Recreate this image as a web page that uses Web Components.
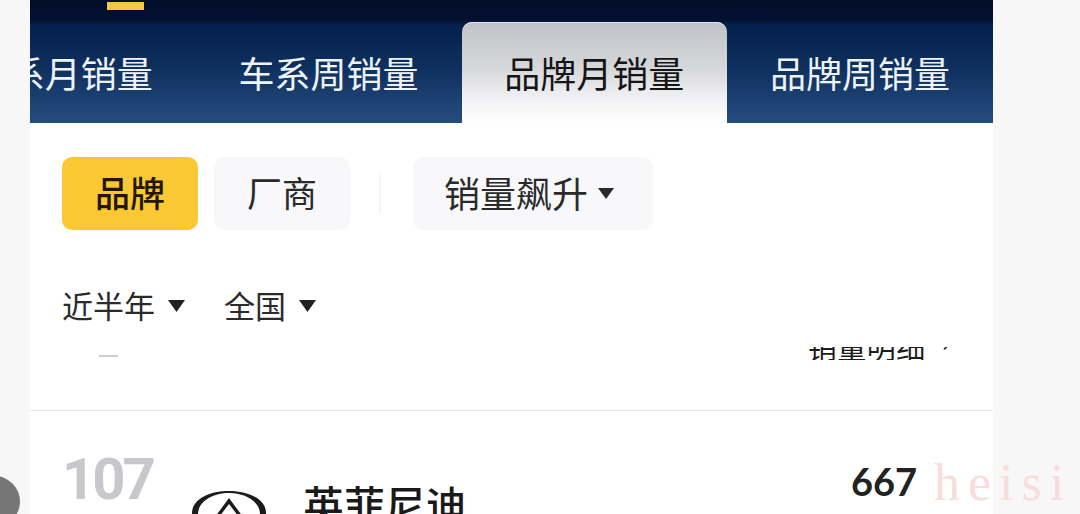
<!DOCTYPE html>
<html lang="zh-CN">
<head>
<meta charset="utf-8">
<title>品牌月销量</title>
<style>
  html, body { margin: 0; height: 514px; overflow: hidden; background: #f7f7f7; }
  body { font-family: "Noto Sans CJK SC", "Noto Sans", sans-serif; }
</style>
</head>
<body>
<sales-panel>
  <sales-tabs active="2">
    <span>车系月销量</span>
    <span>车系周销量</span>
    <span>品牌月销量</span>
    <span>品牌周销量</span>
  </sales-tabs>
  <filter-bar>
    <filter-chip slot="main" active>品牌</filter-chip>
    <filter-chip slot="main">厂商</filter-chip>
    <filter-chip slot="sort" arrow>销量飙升</filter-chip>
    <filter-drop slot="sub">近半年</filter-drop>
    <filter-drop slot="sub">全国</filter-drop>
  </filter-bar>
  <clip-header>销量明细</clip-header>
  <rank-row rank="107" name="英菲尼迪" sales="667">
    <svg slot="logo" width="76" height="46" viewBox="0 0 76 46" aria-label="英菲尼迪">
      <path fill="#1c1c1c" fill-rule="evenodd" d="M37 0C16 0 0 9 0 22s17 23 37 23 37-10 37-23S58 0 37 0ZM37 2C20 2 6 11 6 23s14 20 31 20 31-8 31-20S54 2 37 2Z"/>
      <path fill="#1c1c1c" d="M37 7 20 30h4L37 13l13 17h4Z"/>
    </svg>
  </rank-row>
</sales-panel>
<page-overlay></page-overlay>

<script>
// outer white column, sits at x 30..993 on the grey page
class SalesPanel extends HTMLElement {
  constructor() {
    super();
    this.attachShadow({ mode: 'open' }).innerHTML = `
      <style>
        :host { display: block; width: 963px; height: 514px; margin-left: 30px; background: #fff; overflow: hidden; }
      </style>
      <slot></slot>`;
  }
}

// dark header band + tab strip, scrolled a little so the first tab is cut off
class SalesTabs extends HTMLElement {
  constructor() {
    super();
    this.attachShadow({ mode: 'open' }).innerHTML = `
      <style>
        :host {
          display: block;
          height: 123px;
          overflow: hidden;
          background: linear-gradient(180deg, #020d28 0, #031030 20px, #04204c 24px, #0f315f 70px, #264d80 123px);
        }
        .band { height: 22px; padding-left: 77px; }
        .mark { display: block; width: 37px; height: 8px; margin-top: 2px; background: #f4c64a; float: left; }
        .strip { display: flex; margin-left: -100px; width: 1063px; height: 101px; }
        ::slotted(span) {
          flex: 1 1 0;
          display: flex;
          align-items: center;
          justify-content: center;
          padding-bottom: 2px;
          font-size: 36px;
          color: #eef3f8;
          white-space: nowrap;
        }
        ::slotted(span.on) {
          color: #151515;
          border-radius: 10px 10px 0 0;
          box-shadow: inset 0 1px 0 #dfe6ee;
          background: linear-gradient(180deg, #bfc2c8 0, #d6d7da 45%, #f3f3f5 78%, #fff 100%);
        }
      </style>
      <div class="band"><i class="mark"></i></div>
      <div class="strip"><slot></slot></div>`;
  }
  connectedCallback() {
    const idx = Number(this.getAttribute('active'));
    [...this.children].forEach((el, i) => el.classList.toggle('on', i === idx));
  }
}

class FilterBar extends HTMLElement {
  constructor() {
    super();
    this.attachShadow({ mode: 'open' }).innerHTML = `
      <style>
        :host { display: block; padding: 34px 0 0 32px; }
        .top { display: flex; align-items: center; height: 73px; }
        .main { display: flex; gap: 16px; }
        .sep { width: 2px; height: 40px; margin: 0 32px 0 29px; background: #f6f6f8; }
        .sub { display: flex; gap: 39px; height: 40px; margin-top: 56px; }
      </style>
      <div class="top">
        <div class="main"><slot name="main"></slot></div>
        <div class="sep"></div>
        <slot name="sort"></slot>
      </div>
      <div class="sub"><slot name="sub"></slot></div>`;
  }
}

class FilterChip extends HTMLElement {
  constructor() {
    super();
    this.attachShadow({ mode: 'open' }).innerHTML = `
      <style>
        :host {
          display: flex;
          align-items: center;
          justify-content: center;
          gap: 10px;
          box-sizing: border-box;
          min-width: 136px;
          height: 73px;
          padding: 0 32px 4px;
          border-radius: 10px;
          background: #f8f8fa;
          color: #2a2a2a;
          font-size: 35px;
          white-space: nowrap;
        }
        :host([active]) { background: #fac832; color: #231605; font-weight: 500; }
        :host([arrow]) { padding: 0 39px 4px 31px; font-size: 36px; }
        .tri { display: none; width: 16px; height: 11px; margin-top: 4px; background: #2a2a2a; clip-path: polygon(0 0, 100% 0, 50% 100%); }
        :host([arrow]) .tri { display: block; }
      </style>
      <slot></slot><i class="tri"></i>`;
  }
}

class FilterDrop extends HTMLElement {
  constructor() {
    super();
    this.attachShadow({ mode: 'open' }).innerHTML = `
      <style>
        :host { display: flex; align-items: center; gap: 13px; padding-bottom: 4px; font-size: 31px; color: #2b2b2b; white-space: nowrap; }
        .tri { width: 17px; height: 12px; margin-top: 4px; background: #222; clip-path: polygon(0 0, 100% 0, 50% 100%); }
      </style>
      <slot></slot><i class="tri"></i>`;
  }
}

// the list header is scrolled under the sticky filters, only its bottom edge shows
class ClipHeader extends HTMLElement {
  constructor() {
    super();
    this.attachShadow({ mode: 'open' }).innerHTML = `
      <style>
        :host { display: block; box-sizing: border-box; height: 85px; padding-top: 21px; border-bottom: 1px solid #e6e6e8; }
        .clip {
          display: flex;
          justify-content: space-between;
          align-items: flex-end;
          height: 13px;
          padding: 0 42px 0 69px;
          overflow: hidden;
        }
        .dash { width: 19px; height: 2px; margin-bottom: 3px; background: #cdcdd2; }
        .txt { display: flex; font-size: 29px; line-height: 40px; letter-spacing: 0.5px; margin-bottom: -6px; color: #1d1d1d; white-space: nowrap; }
        .chev { margin-left: 16px; transform: translateY(-7px); }
      </style>
      <div class="clip"><i class="dash"></i><span class="txt"><slot></slot><span class="chev">›</span></span></div>`;
  }
}

class RankRow extends HTMLElement {
  constructor() {
    super();
    const root = this.attachShadow({ mode: 'open' });
    root.innerHTML = `
      <style>
        :host { display: flex; align-items: flex-start; padding: 0 76px 0 32px; height: 103px; }
        .rank {
          width: 130px;
          margin-top: 38px;
          font: 700 58px/60px Roboto, sans-serif;
          letter-spacing: -3px;
          color: #c7c7cc;
        }
        .logo { width: 111px; margin-top: 80px; }
        .name { flex: 1; margin-top: 62px; font-size: 41px; line-height: 60px; font-weight: 500; color: #1a1a1a; }
        .sales { margin-top: 42px; font: 700 38px/56px Lato, sans-serif; color: #222; }
      </style>
      <div class="rank"></div>
      <div class="logo"><slot name="logo"></slot></div>
      <div class="name"></div>
      <div class="sales"></div>`;
    root.querySelector('.rank').textContent = this.getAttribute('rank');
    root.querySelector('.name').textContent = this.getAttribute('name');
    root.querySelector('.sales').textContent = this.getAttribute('sales');
  }
}

// floating button at the screen edge and the image watermark
class PageOverlay extends HTMLElement {
  constructor() {
    super();
    this.attachShadow({ mode: 'open' }).innerHTML = `
      <style>
        :host { display: block; }
        .dot { position: absolute; left: -31px; top: 476px; width: 51px; height: 51px; border-radius: 50%; background: #767676; }
        .mark {
          position: absolute;
          left: 934px;
          top: 457px;
          font: 52px/52px "Liberation Serif", serif;
          letter-spacing: 8px;
          color: #f9dcdc;
        }
      </style>
      <div class="dot"></div>
      <div class="mark">heisi</div>`;
  }
}

customElements.define('sales-panel', SalesPanel);
customElements.define('sales-tabs', SalesTabs);
customElements.define('filter-bar', FilterBar);
customElements.define('filter-chip', FilterChip);
customElements.define('filter-drop', FilterDrop);
customElements.define('clip-header', ClipHeader);
customElements.define('rank-row', RankRow);
customElements.define('page-overlay', PageOverlay);
</script>
</body>
</html>
